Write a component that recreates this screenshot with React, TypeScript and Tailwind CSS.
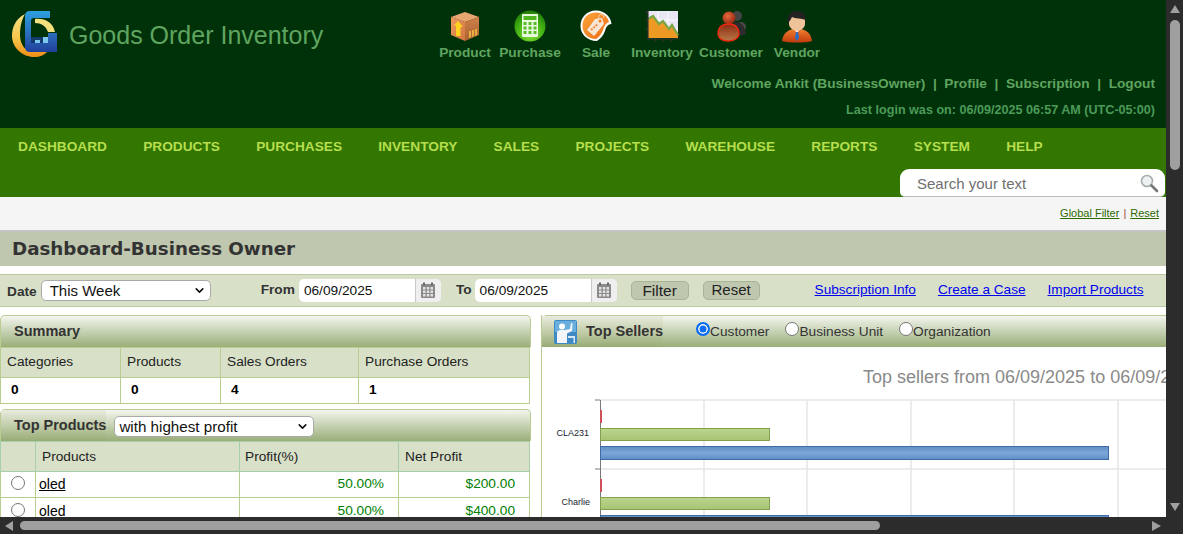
import { ChevronDown } from 'lucide-react';

const font = "font-['Liberation_Sans',Arial,sans-serif]";

const ProductIcon = () => (
  <svg width="32" height="32" viewBox="0 0 32 32">
    <defs>
      <linearGradient id="boxL" x1="0" y1="0" x2="1" y2="1"><stop offset="0" stopColor="#ee9c60" /><stop offset="1" stopColor="#d0743e" /></linearGradient>
      <linearGradient id="boxR" x1="0" y1="0" x2="0" y2="1"><stop offset="0" stopColor="#cf8048" /><stop offset="1" stopColor="#a86232" /></linearGradient>
    </defs>
    <path d="M16 2 L30 7 L16 12 L2 7 Z" fill="#e8a670" />
    <path d="M2 7 L16 12 V31 L2 25 Z" fill="url(#boxL)" />
    <path d="M30 7 L16 12 V31 L30 25 Z" fill="url(#boxR)" />
    <path d="M9 11 L14 17 H11.500 V26 H7 V15.500 H4.500 Z" fill="#ffd21f" />
    <path d="M20 21 h2 v6 l-2 1 Z M23 20 h2 v6 l-2 1 Z M26 19 h2 v6 l-2 1 Z" fill="#e8b040" />
  </svg>
);

const PurchaseIcon = () => (
  <svg width="32" height="32" viewBox="0 0 32 32">
    <defs>
      <radialGradient id="ball" cx="0.5" cy="0.75" r="0.75"><stop offset="0" stopColor="#8ce43a" /><stop offset="0.6" stopColor="#3fae12" /><stop offset="1" stopColor="#1e7a08" /></radialGradient>
    </defs>
    <circle cx="16" cy="16" r="15.500" fill="url(#ball)" />
    <rect x="8" y="4" width="16" height="23" rx="1" fill="#e8f8dc" />
    <rect x="9.500" y="6" width="13" height="4" fill="#4fb51e" />
    <path d="M9.500 12 h3 v3 h-3Z M14.500 12 h3 v3 h-3Z M19.500 12 h3 v3 h-3Z M9.500 16.500 h3 v3 h-3Z M14.500 16.500 h3 v3 h-3Z M19.500 16.500 h3 v3 h-3Z M9.500 21 h3 v3 h-3Z M14.500 21 h3 v3 h-3Z M19.500 21 h3 v3 h-3Z" fill="#58bb28" />
  </svg>
);

const SaleIcon = () => (
  <svg width="32" height="32" viewBox="0 0 32 32">
    <defs>
      <linearGradient id="tagBg" x1="0" y1="0" x2="1" y2="1"><stop offset="0" stopColor="#f9a63c" /><stop offset="1" stopColor="#ee6a14" /></linearGradient>
    </defs>
    <path d="M16 0.500 C25 0.500 31 7 31.500 14 C28 14 26 17 25 21 C23 26 20 29 17 31 C7 31 0.500 24 0.500 16 C0.500 7 7 0.500 16 0.500Z" fill="#fff" />
    <path d="M16 2.500 C23 2.500 28 7 29 12 C26 13 24 16 23 20 C21 25 19 27 16 29 C8 29 2.500 23 2.500 16 C2.500 8 8 2.500 16 2.500Z" fill="url(#tagBg)" />
    <path d="M15 9 L22 8 L24 14 L14 26 L7 20 Z" fill="#f7e6d6" />
    <circle cx="20" cy="11" r="1.500" fill="#ee7a1e" />
    <path d="M19 10 C17 4 23 2 24 8" fill="none" stroke="#fbe3c8" strokeWidth="0.800" />
    <path d="M11 20 L18 14" stroke="#ee8a3a" strokeWidth="2" strokeDasharray="2 1" />
  </svg>
);

const InventoryIcon = () => (
  <svg width="34" height="32" viewBox="0 0 34 32">
    <rect x="3" y="1" width="30" height="27" fill="#e9e7f4" />
    <path d="M13 1 V28 M23 1 V28 M3 10 H33 M3 19 H33" stroke="#fff" strokeWidth="0.800" />
    <path d="M3 9 L8 6 L14 14 L18 11 L24 19 L27 15 L33 25 V28 H3 Z" fill="#ed9a24" />
    <path d="M3 9 L8 6 L14 14 L18 11 L24 19 L27 15 L33 25" fill="none" stroke="#7aa648" strokeWidth="2.200" />
    <path d="M3 0 V29 H33 M0 2 H3 M0 10 H3 M0 19 H3 M10 29 V32 M18 29 V32 M26 29 V32" fill="none" stroke="#333" strokeWidth="1.200" />
  </svg>
);

const CustomerIcon = () => (
  <svg width="32" height="32" viewBox="0 0 32 32">
    <defs>
      <radialGradient id="redHead" cx="0.4" cy="0.35" r="0.7"><stop offset="0" stopColor="#e86a3c" /><stop offset="1" stopColor="#8c2410" /></radialGradient>
      <linearGradient id="redBody" x1="0" y1="0" x2="0" y2="1"><stop offset="0" stopColor="#8c2a10" /><stop offset="1" stopColor="#b87a48" /></linearGradient>
    </defs>
    <circle cx="22" cy="6" r="5" fill="#444" />
    <circle cx="26" cy="17" r="5" fill="#4a4a4a" />
    <path d="M19 12 C25 11 30 16 31 24 C27 26 23 26 20 25 Z" fill="#2c2c2c" />
    <circle cx="14" cy="8" r="6.500" fill="url(#redHead)" />
    <path d="M3 24 C3 16 8 14 14 14 C20 14 24 17 24 25 C22 30 18 31 13 31 C8 31 4 29 3 24Z" fill="url(#redBody)" stroke="#f02810" strokeWidth="1.300" />
  </svg>
);

const VendorIcon = () => (
  <svg width="32" height="33" viewBox="0 0 32 33">
    <defs>
      <linearGradient id="suit" x1="0" y1="0" x2="0" y2="1"><stop offset="0" stopColor="#f08030" /><stop offset="1" stopColor="#c23a0c" /></linearGradient>
    </defs>
    <path d="M1 31 C2 23 7 20 12 19 H20 C25 20 30 23 31 31 C24 33 8 33 1 31Z" fill="url(#suit)" />
    <path d="M13 19 L16 23 L19 19 Z" fill="#fff" />
    <path d="M15 22 H17 L18 28 L16 31 L14 28 Z" fill="#2a6cc8" />
    <path d="M8 9 C8 5 24 5 24 9 V14 C24 18 19 21 16 21 C13 21 8 18 8 14 Z" fill="#eec39a" />
    <path d="M7 13 C5 5 10 1 16 1 C22 1 26 5 24.500 10 C21 8 14 9 11 7 C10 9 9 11 7 13Z" fill="#222" />
  </svg>
);

const Logo = () => (
  <svg width="48" height="48" viewBox="0 0 48 48">
    <defs>
      <linearGradient id="cres" x1="0" y1="0" x2="0" y2="1"><stop offset="0" stopColor="#f6e088" /><stop offset="0.55" stopColor="#f6c84c" /><stop offset="1" stopColor="#ee8e14" /></linearGradient>
      <linearGradient id="gBlue" x1="0" y1="0" x2="0" y2="1"><stop offset="0" stopColor="#2ca0e0" /><stop offset="0.6" stopColor="#2a68b8" /><stop offset="1" stopColor="#20409c" /></linearGradient>
    </defs>
    <path d="M15 4 C5 9 2 18 2 26 C2 38 13 47 24 47 C30 47 34 45 37 42 H24 C15 42 10 34 10 25 C10 16 12 9 15 4Z" fill="url(#cres)" />
    <path d="M25 9 C34 8 43 12 45 22 H38 C36 16 31 13 25 13 Z" fill="#f4e07c" />
    <path d="M15 6 Q15 1 20 1 H40 V8 H24 Q21 8 21 11 V33 H38 V23 H47 V42 H20 Q15 42 15 37 Z" fill="url(#gBlue)" />
    <path d="M21 27 H38 V33 H21 Z" fill="#123a6a" />
    <path d="M25 30 H30 V33 H25 Z M33 27 H38 V33 H33 Z" fill="#7cc8ee" />
  </svg>
);

const CalendarIcon = () => (
  <svg width="16" height="17" viewBox="0 0 16 17">
    <rect x="1" y="2" width="14" height="14" rx="1" fill="#8a8a8a" />
    <rect x="3" y="0.500" width="2" height="3" fill="#6a6a6a" />
    <rect x="11" y="0.500" width="2" height="3" fill="#6a6a6a" />
    <path d="M3 5 h2.500 v2.500 h-2.500Z M6.800 5 h2.500 v2.500 h-2.500Z M10.500 5 h2.500 v2.500 h-2.500Z M3 8.500 h2.500 v2.500 h-2.500Z M6.800 8.500 h2.500 v2.500 h-2.500Z M10.500 8.500 h2.500 v2.500 h-2.500Z M3 12 h2.500 v2.500 h-2.500Z M6.800 12 h2.500 v2.500 h-2.500Z M10.500 12 h2.500 v2.500 h-2.500Z" fill="#e4e4e4" />
  </svg>
);

const SellerIcon = () => (
  <svg width="23" height="24" viewBox="0 0 23 24">
    <rect x="0" y="0" width="23" height="24" rx="2" fill="#3f8ac4" />
    <rect x="1" y="1" width="21" height="11" fill="#6aaede" />
    <circle cx="8" cy="6.500" r="3" fill="#fff" />
    <path d="M3 23 V13 Q3 10 7 10 H11 L16 9 L17 3 L18.500 3.500 L18 11 L13 13.500 V23 Z" fill="#f2f6fa" />
    <path d="M14 16 H21 V23 H19.500 V18 H14Z" fill="#d5e8f5" />
  </svg>
);

const SearchIcon = () => (
  <svg width="20" height="20" viewBox="0 0 20 20">
    <circle cx="8" cy="8" r="5.500" fill="#eef1f2" stroke="#a8aeb0" strokeWidth="1.600" />
    <path d="M12.500 12.500 L18 18" stroke="#777" strokeWidth="2.600" strokeLinecap="round" />
  </svg>
);

const Radio = ({ checked = false }: { checked?: boolean }) =>
  checked ? (
    <span className="block h-[14px] w-[14px] rounded-full border-2 border-[#0a6cf0] bg-[#0a6cf0] shadow-[inset_0_0_0_1.5px_#fff]" />
  ) : (
    <span className="block h-[14px] w-[14px] rounded-full border border-[#767676] bg-white" />
  );

const TopIcon = ({ label, w, children }: { label: string; w: string; children: React.ReactNode }) => (
  <div className={`flex flex-col items-center ${w}`}>
    <div className="flex h-[34px] items-center justify-center">{children}</div>
    <span className="mt-[2px] text-[13.7px] leading-[16px] font-bold whitespace-nowrap text-[#5fa55f]">{label}</span>
  </div>
);

const navItems = ['DASHBOARD', 'PRODUCTS', 'PURCHASES', 'INVENTORY', 'SALES', 'PROJECTS', 'WAREHOUSE', 'REPORTS', 'SYSTEM', 'HELP'];

const DateBox = ({ value }: { value: string }) => (
  <div className="flex h-[23px] w-[142px] rounded-[5px] bg-white">
    <span className="flex-1 pl-[5px] leading-[23px] text-[#111]">{value}</span>
    <span className="flex w-[26px] items-center justify-center rounded-r-[5px] border-l border-[#c8c8c8] bg-[#efefef]">
      <CalendarIcon />
    </span>
  </div>
);

const panelHead = 'rounded-t-[5px] border-x border-t border-[#b9cc92] bg-gradient-to-b from-[#f4f6ef] to-[#9aae78]';
const panelTab = 'bg-gradient-to-b from-[#e9ecdf] via-[#c2cdaa] to-[#98ac76]';

const App = () => {
  return (
    <div className={`grid h-screen w-screen grid-cols-[1166px_17px] grid-rows-[517px_17px] overflow-hidden bg-[#2c2c2c] ${font}`}>
      <main className="overflow-hidden bg-white">
        {/* Header */}
        <header className="h-[128px] bg-[#00320a]">
          <div className="flex h-[72px]">
            <div className="flex w-[433px] items-start pt-[10px] pl-[10px]">
              <Logo />
              <span className="mt-[8px] ml-[11px] text-[25px] leading-[34px] whitespace-nowrap text-[#5fa55f]">Goods Order Inventory</span>
            </div>
            <div className="flex pt-[9px]">
              <TopIcon label="Product" w="w-[64px]"><ProductIcon /></TopIcon>
              <TopIcon label="Purchase" w="w-[66px]"><PurchaseIcon /></TopIcon>
              <TopIcon label="Sale" w="w-[66px]"><SaleIcon /></TopIcon>
              <TopIcon label="Inventory" w="w-[66px]"><InventoryIcon /></TopIcon>
              <TopIcon label="Customer" w="w-[72px]"><CustomerIcon /></TopIcon>
              <TopIcon label="Vendor" w="w-[60px]"><VendorIcon /></TopIcon>
            </div>
          </div>
          <div className="mt-[4px] pr-[11px] text-right text-[13.7px] leading-[16px] font-bold whitespace-pre text-[#5fa55f]">
            {'Welcome Ankit (BusinessOwner)  |  Profile  |  Subscription  |  Logout'}
          </div>
          <div className="mt-[10px] pr-[11px] text-right text-[12.6px] leading-[16px] font-bold text-[#4c9a58]">
            Last login was on: 06/09/2025 06:57 AM (UTC-05:00)
          </div>
        </header>

        {/* Main nav */}
        <nav className="h-[69px] bg-[#337700] pt-[11px]">
          <div className="flex gap-[36.2px] pl-[18px] text-[13.7px] leading-[16px] font-bold text-[#b6de4e]">
            {navItems.map((n) => (
              <span key={n}>{n}</span>
            ))}
          </div>
          <div className="mt-[14px] ml-[900px] flex h-[28px] w-[265px] items-center justify-between rounded-t-[9px] rounded-b-[5px] border-b border-[#bbb] bg-white pr-[6px] pl-[17px]">
            <span className="pt-[3px] text-[15px] text-[#6f6f6f]">Search your text</span>
            <SearchIcon />
          </div>
        </nav>

        {/* Global filter strip */}
        <div className="flex h-[35px] justify-end border-b-2 border-[#c4c4c4] bg-[#f5f5f5] pt-[9px] pr-[7px] text-[11px] leading-[14px] text-[#2d6a00]">
          <span className="underline">Global Filter</span>
          <span className="mx-[4px] text-[#a05030]">|</span>
          <span className="underline">Reset</span>
        </div>

        <div className="h-[34px] bg-[#bfc7ae] pl-[12px] font-['DejaVu_Sans',sans-serif] text-[18.25px] leading-[33px] font-bold text-[#333]">
          Dashboard-Business Owner
        </div>

        {/* Date filter */}
        <div className="mt-[8px] flex h-[33px] items-center border-y border-[#bcc9a0] bg-[#d8e0c8] text-[13.7px]">
          <span className="mt-[3px] ml-[7px] font-bold text-[#333]">Date</span>
          <div className="ml-[4px] flex h-[21px] w-[170px] items-center justify-between rounded-[5px] border border-[#aaa] bg-white pr-[4px] pl-[8px] text-[15px] text-[#111]">
            <span className="pt-[1px]">This Week</span>
            <ChevronDown size={13} strokeWidth={3} />
          </div>
          <span className="ml-[50px] font-bold text-[#333]">From</span>
          <div className="ml-[4px]"><DateBox value="06/09/2025" /></div>
          <span className="ml-[15px] font-bold text-[#333]">To</span>
          <div className="ml-[3px]"><DateBox value="06/09/2025" /></div>
          <span className="ml-[14px] flex h-[19px] w-[58px] items-center justify-center rounded-[5px] border border-[#a9b396] bg-[#bfc7ae] text-[15.5px] text-[#222]">Filter</span>
          <span className="ml-[14px] flex h-[19px] w-[57px] items-center justify-center rounded-[5px] border border-[#a9b396] bg-[#bfc7ae] text-[15px] text-[#222]">Reset</span>
          <a className="ml-[55px] text-[13.6px] text-[#0000ee] underline">Subscription Info</a>
          <a className="ml-[22px] text-[13.6px] text-[#0000ee] underline">Create a Case</a>
          <a className="ml-[22px] text-[13.6px] text-[#0000ee] underline">Import Products</a>
        </div>

        <div className="mt-[8px] flex w-[1400px] items-start">
          {/* Left column */}
          <div className="w-[531px]">
            <div className={`h-[32px] ${panelHead} pl-[13px] text-[14.5px] leading-[31px] font-bold text-[#333]`}>Summary</div>
            <table className="w-[530px] table-fixed border-collapse border border-[#b9cc92] text-[13.7px] text-[#222]">
              <colgroup>
                <col className="w-[120px]" />
                <col className="w-[100px]" />
                <col className="w-[138px]" />
                <col />
              </colgroup>
              <thead>
                <tr className="h-[30px] bg-[#d8e0c8]">
                  {['Categories', 'Products', 'Sales Orders', 'Purchase Orders'].map((h) => (
                    <th key={h} className="border border-[#b9cc92] pb-[1px] pl-[6px] text-left font-normal">{h}</th>
                  ))}
                </tr>
              </thead>
              <tbody>
                <tr className="h-[26px]">
                  {['0', '0', '4', '1'].map((v, i) => (
                    <td key={i} className="border border-[#b9cc92] pl-[10px] font-bold text-black">{v}</td>
                  ))}
                </tr>
              </tbody>
            </table>

            <div className={`mt-[5px] flex h-[32px] items-start ${panelHead}`}>
              <span className={`h-[31px] pl-[13px] text-[14.5px] leading-[31px] font-bold whitespace-nowrap text-[#333] ${panelTab}`}>Top Products</span>
              <div className="mt-[6px] ml-[8px] flex h-[21px] w-[200px] items-center justify-between rounded-[5px] border border-[#aaa] bg-white pr-[4px] pl-[4px] text-[15.2px] text-[#111]">
                <span className="pt-[1px]">with highest profit</span>
                <ChevronDown size={13} strokeWidth={3} />
              </div>
            </div>
            <table className="w-[530px] table-fixed border-collapse border border-[#b9cc92] text-[13.7px] text-[#222]">
              <colgroup>
                <col className="w-[35px]" />
                <col className="w-[204px]" />
                <col className="w-[159px]" />
                <col />
              </colgroup>
              <thead>
                <tr className="h-[30px] bg-[#d8e0c8]">
                  <th className="border border-[#a8d0a8]" />
                  <th className="border border-[#a8d0a8] pt-[1px] pl-[6px] text-left font-normal">Products</th>
                  <th className="border border-[#a8d0a8] pt-[1px] pl-[5px] text-left font-normal">Profit(%)</th>
                  <th className="border border-[#a8d0a8] pt-[1px] pl-[6px] text-left font-normal">Net Profit</th>
                </tr>
              </thead>
              <tbody>
                {['$200.00', '$400.00'].map((p, i) => (
                  <tr key={p} className={i === 0 ? 'h-[26px]' : 'h-[28px]'}>
                    <td className="border border-[#b9cc92]">
                      <div className="mb-[4px] flex justify-center"><Radio /></div>
                    </td>
                    <td className="border border-[#b9cc92] pl-[3px] text-[14px] text-black underline">oled</td>
                    <td className="border border-[#b9cc92] pr-[14px] text-right text-[#008000]">50.00%</td>
                    <td className="border border-[#b9cc92] pr-[14px] text-right text-[#008000]">{p}</td>
                  </tr>
                ))}
              </tbody>
            </table>
          </div>

          {/* Top sellers */}
          <div className="ml-[10px] flex-1 border-l border-[#b9cc92]">
            <div className={`flex h-[32px] items-start ${panelHead} border-l-0`}>
              <div className={`flex h-[31px] items-start pl-[12px] ${panelTab}`}>
                <div className="mt-[4px]"><SellerIcon /></div>
                <span className="ml-[9px] text-[14.5px] leading-[31px] font-bold whitespace-nowrap text-[#333]">Top Sellers</span>
              </div>
              <div className="ml-[33px] flex items-center pt-[6px] text-[13.7px] text-[#333]">
                <span className="mb-[6px]"><Radio checked /></span>
                <span>Customer</span>
                <span className="mb-[6px] ml-[16px]"><Radio /></span>
                <span>Business Unit</span>
                <span className="mb-[6px] ml-[16px]"><Radio /></span>
                <span>Organization</span>
              </div>
            </div>
            <div className="bg-white">
              <div className="pt-[19px] pl-[321px] text-[18px] leading-[22px] whitespace-nowrap text-[#8a8a8a]">
                Top sellers from 06/09/2025 to 06/09/2025
              </div>
              <svg width="700" height="160" viewBox="0 0 700 160" className="mt-[11px]">
                <defs>
                  <linearGradient id="barG" x1="0" y1="0" x2="0" y2="1"><stop offset="0" stopColor="#bcd68e" /><stop offset="1" stopColor="#a6c474" /></linearGradient>
                  <linearGradient id="barB" x1="0" y1="0" x2="0" y2="1"><stop offset="0" stopColor="#5f8fc6" /><stop offset="0.5" stopColor="#7ca6d6" /><stop offset="1" stopColor="#5f8fc6" /></linearGradient>
                </defs>
                <g stroke="#e6e6e6" strokeWidth="1.500">
                  <path d="M58 1 H700 M58 70 H700 M58 139 H700" />
                  <path d="M162 1 V160 M265 1 V160 M369 1 V160 M472 1 V160 M576 1 V160 M680 1 V160" />
                </g>
                <path d="M58.500 1 V160 M53 1 H58 M53 70 H58 M53 139 H58" stroke="#7a7a7a" strokeWidth="1" fill="none" />
                <rect x="58" y="11" width="2" height="13" fill="#d0505a" />
                <rect x="58.500" y="29.500" width="169" height="12" fill="url(#barG)" stroke="#83a04c" />
                <rect x="58.500" y="47.500" width="508" height="13" fill="url(#barB)" stroke="#3f6ca6" />
                <rect x="58" y="80" width="2" height="13" fill="#d0505a" />
                <rect x="58.500" y="98.500" width="169" height="12" fill="url(#barG)" stroke="#83a04c" />
                <rect x="58.500" y="116.500" width="508" height="13" fill="url(#barB)" stroke="#3f6ca6" />
                <text x="47" y="37" textAnchor="end" fontSize="9" fill="#223">CLA231</text>
                <text x="48" y="106" textAnchor="end" fontSize="9" fill="#223">Charlie</text>
              </svg>
            </div>
          </div>
        </div>
      </main>

      {/* Vertical scrollbar */}
      <div className="flex flex-col items-center">
        <span className="mt-[5px] h-0 w-0 border-x-[5px] border-b-[8px] border-x-transparent border-b-[#9f9f9f]" />
        <span className="mt-[7px] h-[150px] w-[10px] rounded-full bg-[#9f9f9f]" />
        <span className="mt-auto mb-[6px] h-0 w-0 border-x-[5.5px] border-t-[8px] border-x-transparent border-t-[#9f9f9f]" />
      </div>

      {/* Horizontal scrollbar */}
      <div className="flex items-center">
        <span className="ml-[5px] h-0 w-0 border-y-[5.5px] border-r-[8px] border-y-transparent border-r-[#9f9f9f]" />
        <span className="ml-[7px] h-[9px] w-[860px] rounded-full bg-[#9f9f9f]" />
        <span className="mr-[5px] ml-auto h-0 w-0 border-y-[5.5px] border-l-[9px] border-y-transparent border-l-[#9f9f9f]" />
      </div>
      <div />
    </div>
  );
};

export default App;
